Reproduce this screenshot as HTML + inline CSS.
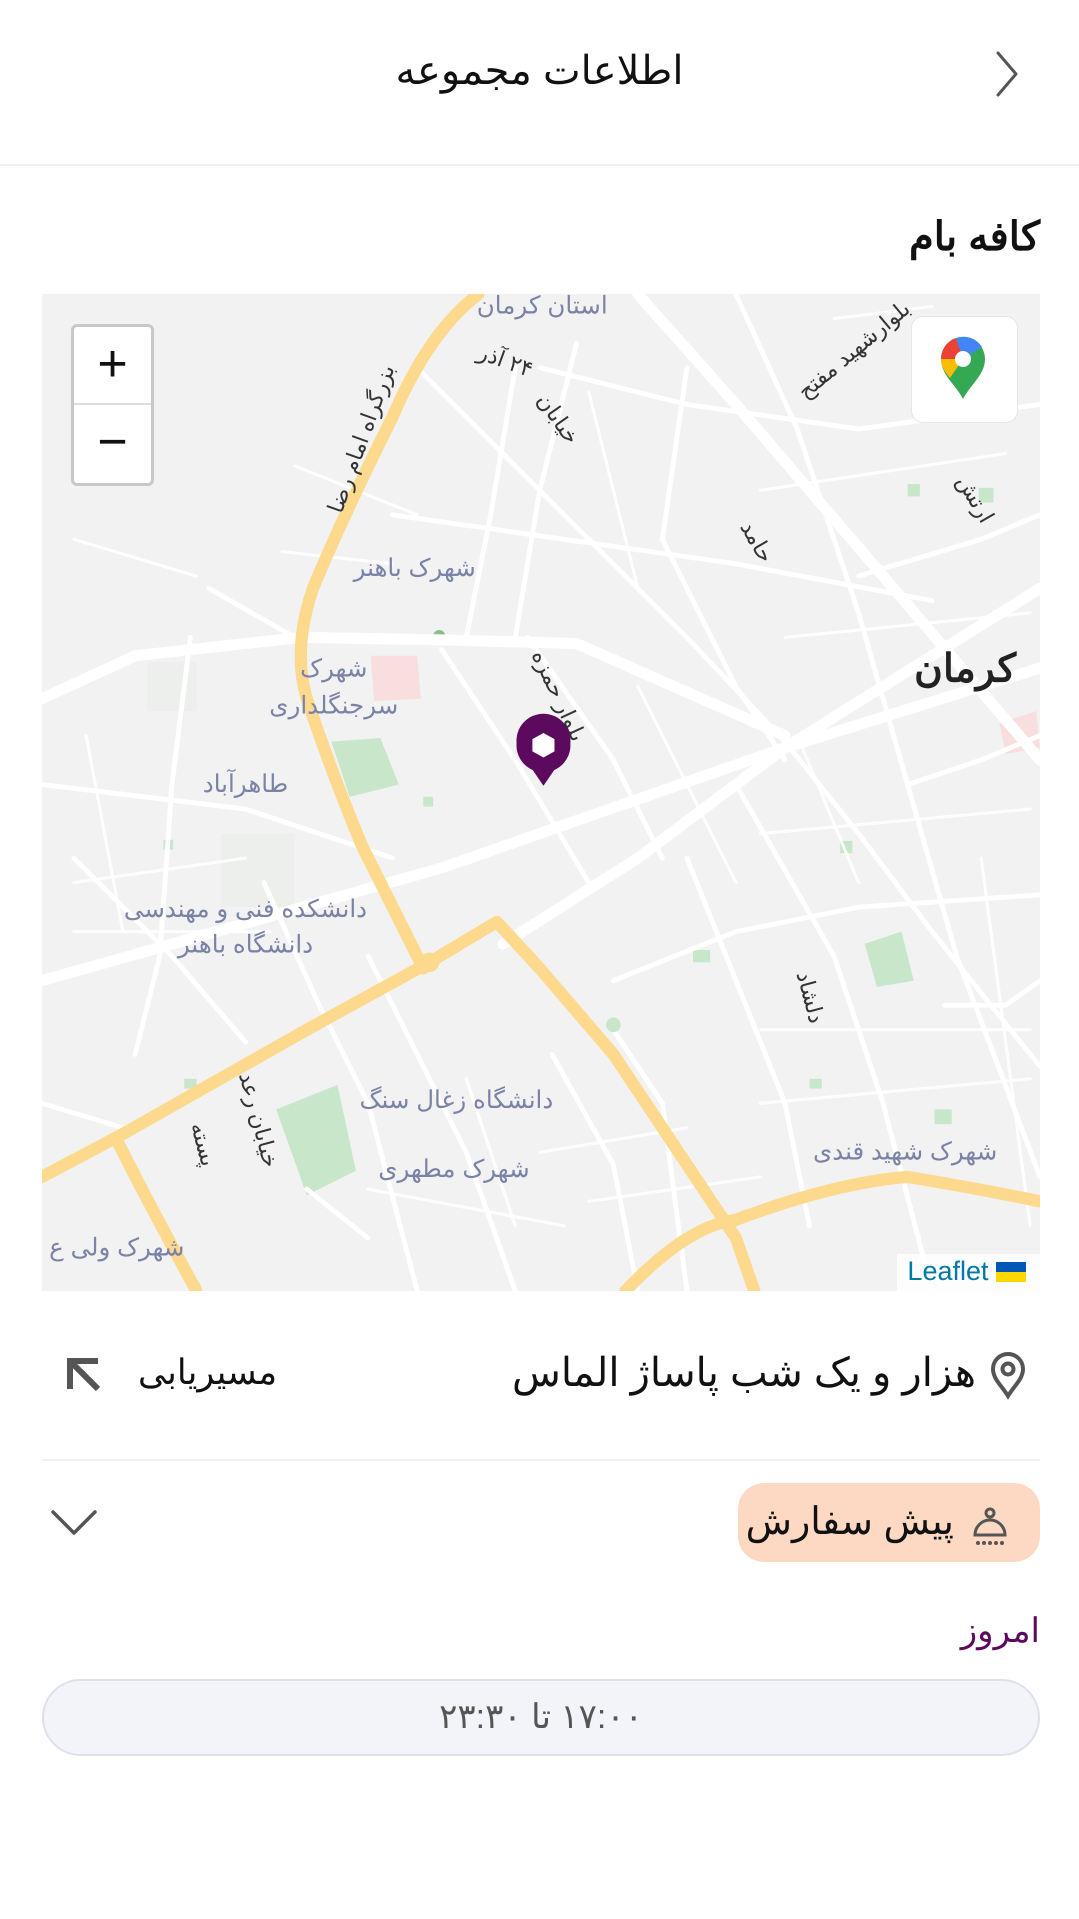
<!DOCTYPE html>
<html lang="fa" dir="rtl"><head><meta charset="utf-8">
<style>
*{margin:0;padding:0;box-sizing:border-box}
html,body{width:1079px;height:1919px;background:#fff;overflow:hidden;font-family:"Liberation Sans","Noto Sans CJK SC",sans-serif;color:#111}
.abs{position:absolute}
.hdr{position:absolute;left:0;top:0;width:1079px;height:166px;border-bottom:2px solid #f1f1f3}
.title{position:absolute;left:0;width:1079px;top:44px;text-align:center;font-size:40px;line-height:54px}
.name{position:absolute;right:39px;top:210px;font-size:40px;font-weight:bold;line-height:54px}
.map{position:absolute;left:42px;top:294px;width:998px;height:997px;overflow:hidden;background:#f2f2f2}
.zoom{position:absolute;left:29px;top:30px;width:83px;height:162px;border:3px solid #c8c8c8;border-radius:6px;background:#fff}
.zoom div{height:78px;text-align:center;font-size:52px;line-height:74px;color:#111;font-family:"Liberation Sans",sans-serif}
.zoom div:first-child{border-bottom:2px solid #ddd}
.gm{position:absolute;left:869px;top:22px;width:107px;height:107px;background:#fff;border-radius:12px;border:1px solid #e6e6e6}
.leaf{position:absolute;right:0;bottom:0;background:rgba(255,255,255,.85);padding:2px 14px 4px 10px;font-size:27px;color:#0078a8;direction:ltr}
.row{position:absolute;font-size:40px;line-height:54px}
.div{position:absolute;left:42px;width:998px;height:2px;background:#f1f1f3;top:1459px}
.pill{position:absolute;left:738px;top:1483px;width:302px;height:79px;border-radius:26px;background:#fdd9c4}
.time{position:absolute;left:42px;top:1679px;width:998px;height:77px;border-radius:39px;background:#f3f4f9;border:2px solid #dde0ea;text-align:center;font-size:34px;line-height:73px;color:#555}
</style></head><body>
<div class="hdr">
  <div class="title">اطلاعات مجموعه</div>
  <svg class="abs" style="left:992px;top:50px" width="32" height="48" viewBox="0 0 32 48"><path d="M6 3 L24 24 L6 45" fill="none" stroke="#555" stroke-width="3" stroke-linecap="round" stroke-linejoin="round"/></svg>
</div>
<div class="name">کافه بام</div>

<div class="map">
<svg width="998" height="997" viewBox="34 240 814 813" style="position:absolute;left:0;top:0">
<rect x="34" y="240" width="814" height="813" fill="#f2f2f3"/>
<g fill="#e9ede9" opacity=".6"><rect x="120" y="540" width="40" height="40"/><rect x="180" y="680" width="60" height="60"/></g>
<g fill="#c8e6c9">
<path d="M270 605 L310 602 L325 640 L285 650Z"/><path d="M225 905 L275 885 L290 955 L250 975Z"/>
<path d="M705 770 L735 760 L745 800 L715 805Z"/><rect x="798" y="398" width="12" height="12"/><rect x="565" y="775" width="14" height="10"/>
<rect x="740" y="395" width="10" height="10"/><rect x="762" y="905" width="14" height="12"/><rect x="660" y="880" width="10" height="8"/>
<rect x="685" y="686" width="10" height="10"/><rect x="150" y="880" width="10" height="8"/><rect x="345" y="650" width="8" height="8"/><rect x="133" y="685" width="8" height="8"/>
</g>
<path d="M302 535 L340 535 L343 570 L305 572Z" fill="#f8dede"/><path d="M815 590 L845 580 L848 610 L820 615Z" fill="#f8dede"/>
<circle cx="358" cy="519" r="5" fill="#8bbd8b"/>
<g stroke="#fff" fill="none" stroke-linecap="round">
<g stroke-width="9">
<path d="M34 800 L360 708 L640 610 L848 545"/>
<path d="M34 570 L110 535 L245 520 L360 522 L470 525 L640 600"/>
<path d="M520 240 L600 330 L720 470 L848 620"/>
<path d="M410 770 L520 700 L640 610 L720 560 L848 480"/>
</g>
<g stroke-width="4">
<path d="M340 300 L460 420 L560 520 L640 605 L700 680 L760 760 L848 870"/>
<path d="M600 240 L650 350 L700 500 L740 640 L780 780 L848 960"/>
<path d="M34 640 L200 660 L320 700"/>
<path d="M155 520 L140 640 L130 780 L110 860"/>
<path d="M215 720 L260 820 L300 900 L340 1053"/>
<path d="M300 780 L340 860 L380 940 L420 1053"/>
<path d="M420 300 L400 420 L380 520"/>
<path d="M470 280 L440 400 L420 520"/>
<path d="M360 530 L420 620 L480 720"/>
<path d="M430 520 L500 620 L540 700"/>
<path d="M540 440 L600 560 L640 620"/>
<path d="M560 300 L540 440"/>
<path d="M440 300 L560 330 L700 350 L848 330"/>
<path d="M320 420 L460 440 L600 460 L760 490"/>
<path d="M500 800 L600 760 L700 740 L848 730"/>
<path d="M560 700 L600 800 L640 900 L660 1000"/>
<path d="M600 640 L680 780 L720 900 L760 1053"/>
<path d="M700 470 L800 440 L848 420"/>
<path d="M740 640 L800 620 L848 600"/>
<path d="M500 840 L540 900 L560 1053"/>
<path d="M170 480 L240 520"/>
<path d="M60 700 L140 780 L200 850"/>
<path d="M770 820 L820 820 L848 800"/>
<path d="M34 900 L100 920"/>
<path d="M450 860 L500 950 L520 1053"/>
<path d="M250 970 L300 1010"/>
</g>
<g stroke-width="2.5" opacity=".9">
<path d="M240 380 L340 420"/><path d="M230 450 L320 460"/><path d="M60 720 L200 700"/><path d="M60 760 L220 760"/>
<path d="M680 260 L760 250"/><path d="M620 400 L820 370"/><path d="M640 520 L840 500"/><path d="M620 680 L840 660"/>
<path d="M620 840 L840 840"/><path d="M620 900 L840 880"/><path d="M440 940 L560 920"/><path d="M300 970 L460 1000"/>
<path d="M480 320 L520 480"/><path d="M520 560 L600 720"/><path d="M380 880 L420 1000"/><path d="M800 700 L840 1000"/>
<path d="M60 440 L160 470"/><path d="M70 600 L100 760"/><path d="M480 980 L620 960"/><path d="M650 600 L700 720"/>
</g>
</g>
<g stroke="#fcd98c" fill="none" stroke-width="10" stroke-linecap="round" stroke-linejoin="round">
<path d="M390 240 Q350 270 320 340 Q280 420 255 480 Q238 530 250 570 Q270 630 295 690 Q325 750 345 790"/>
<path d="M34 960 L100 925 L250 840 L350 785 L405 752 L440 790 L500 860 L560 950 L600 1010 L615 1053"/>
<path d="M95 930 Q120 980 160 1053"/>
<path d="M510 1053 Q560 1000 600 995 Q680 965 740 960 Q800 970 848 980"/>
</g>
<circle cx="350" cy="785" r="8" fill="#fcd98c"/>
<circle cx="500" cy="836" r="6" fill="#c8e6c9"/>
<g font-family="Liberation Sans, Noto Sans CJK SC, sans-serif" fill="#7a82a6" font-size="20">
<text x="442" y="256" text-anchor="middle">استان کرمان</text>
<text x="338" y="470" text-anchor="middle">شهرک باهنر</text>
<text x="272" y="552" text-anchor="middle">شهرک</text>
<text x="272" y="582" text-anchor="middle">سرجنگلداری</text>
<text x="200" y="646" text-anchor="middle">طاهرآباد</text>
<text x="200" y="748" text-anchor="middle">دانشکده فنی و مهندسی</text>
<text x="200" y="777" text-anchor="middle">دانشگاه باهنر</text>
<text x="372" y="904" text-anchor="middle">دانشگاه زغال سنگ</text>
<text x="370" y="960" text-anchor="middle">شهرک مطهری</text>
<text x="738" y="946" text-anchor="middle">شهرک شهید قندی</text>
<text x="95" y="1024" text-anchor="middle">شهرک ولی ع</text>
</g>
<g font-family="Liberation Sans, Noto Sans CJK SC, sans-serif" fill="#333" font-size="18">
<text transform="translate(300,360) rotate(-70)" text-anchor="middle">بزرگراه امام رضا</text>
<text transform="translate(410,300) rotate(20)" text-anchor="middle">۲۴ آذر</text>
<text transform="translate(450,345) rotate(55)" text-anchor="middle">خیابان</text>
<text transform="translate(700,290) rotate(-40)" text-anchor="middle">بلوارشهید مفتح</text>
<text transform="translate(612,445) rotate(60)" text-anchor="middle">حامد</text>
<text transform="translate(790,410) rotate(60)" text-anchor="middle">ارتش</text>
<text transform="translate(450,570) rotate(65)" text-anchor="middle">بلوار حمزه</text>
<text transform="translate(655,815) rotate(75)" text-anchor="middle">دلشاد</text>
<text transform="translate(205,915) rotate(75)" text-anchor="middle">خیابان رعد</text>
<text transform="translate(160,935) rotate(75)" text-anchor="middle">پسته</text>
</g>
<text x="787" y="556" text-anchor="middle" font-family="Liberation Sans, Noto Sans CJK SC, sans-serif" font-size="32" font-weight="bold" fill="#222">کرمان</text>
<path d="M443 641 L430 622 A22 22 0 1 1 456 622 Z" fill="#5c0a5e"/>
<circle cx="443" cy="608" r="22" fill="#5c0a5e"/>
<path d="M443 598 L452 603 L452 613 L443 618 L434 613 L434 603Z" fill="#fff"/>
</svg>
<div class="zoom"><div>+</div><div>−</div></div>
<div class="gm"><svg width="107" height="107" viewBox="0 0 107 107">
<path d="M53 82 C46 68 31 58 31 42 A22 22 0 0 1 75 42 C75 58 60 68 53 82Z" fill="#34a853"/>
<path d="M31 42 A22 22 0 0 1 46 21 L53 42Z" fill="#ea4335"/>
<path d="M46 21 A22 22 0 0 1 72 30 L53 42Z" fill="#4285f4"/>
<path d="M31 42 C31 50 35 55 40 61 L53 42Z" fill="#fbbc04"/>
<circle cx="53" cy="42" r="8" fill="#fff"/></svg></div>
<div class="leaf">Leaflet <span style="display:inline-block;width:30px;height:20px;vertical-align:-2px;background:linear-gradient(#0057b7 50%,#ffd700 50%)"></span></div>
</div>

<svg class="abs" style="left:988px;top:1350px" width="40" height="50" viewBox="0 0 40 50"><path d="M20 46 C14 36 5 29 5 19 A15 15 0 0 1 35 19 C35 29 26 36 20 46Z" fill="none" stroke="#555" stroke-width="4"/><circle cx="20" cy="19" r="5.5" fill="none" stroke="#555" stroke-width="4"/></svg>
<div class="row" style="right:103px;top:1346px;direction:rtl">هزار و یک شب پاساژ الماس</div>
<div class="row" style="left:138px;top:1346px;font-size:35px">مسیریابی</div>
<svg class="abs" style="left:64px;top:1355px" width="40" height="40" viewBox="0 0 40 40"><path d="M6 34 V6 H34 M6 6 L34 34" fill="none" stroke="#555" stroke-width="6" stroke-linejoin="miter"/></svg>
<div class="div"></div>

<div class="pill"></div>
<svg class="abs" style="left:968px;top:1504px" width="44" height="44" viewBox="0 0 44 44"><circle cx="22" cy="9" r="4" fill="none" stroke="#555" stroke-width="3"/><path d="M7 31 A15 15 0 0 1 37 31 Z" fill="none" stroke="#555" stroke-width="3"/><path d="M6 31 H38" stroke="#555" stroke-width="3"/><g fill="#555"><circle cx="10" cy="39" r="2"/><circle cx="16" cy="39" r="2"/><circle cx="22" cy="39" r="2"/><circle cx="28" cy="39" r="2"/><circle cx="34" cy="39" r="2"/></g></svg>
<div class="row" style="right:125px;top:1495px;font-size:38px">پیش سفارش</div>
<svg class="abs" style="left:50px;top:1508px" width="48" height="30" viewBox="0 0 48 30"><path d="M3 4 L24 25 L45 4" fill="none" stroke="#555" stroke-width="3.5" stroke-linecap="round" stroke-linejoin="round"/></svg>

<div class="row" style="right:39px;top:1604px;font-size:34px;color:#5b0a5e">امروز</div>
<div class="time">۱۷:۰۰ تا ۲۳:۳۰</div>
</body></html>
